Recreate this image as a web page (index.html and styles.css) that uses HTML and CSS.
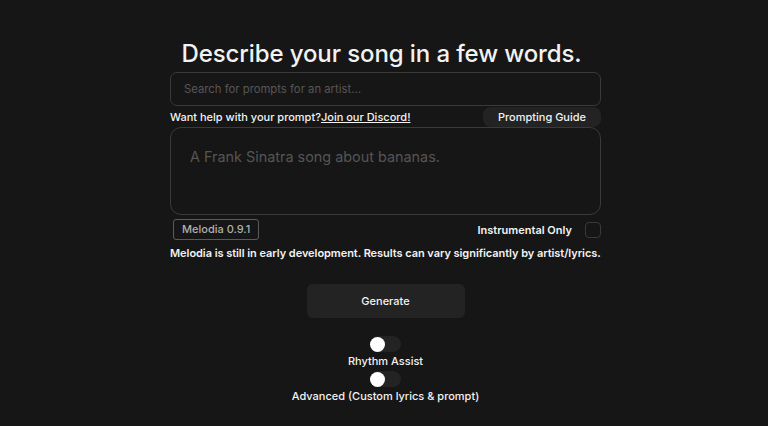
FILE: index.html
```html
<!DOCTYPE html>
<html lang="en">
<head>
    <meta charset="UTF-8">
    <meta name="viewport" content="width=device-width, initial-scale=1.0">
    <title>Melodia</title>
    <link rel="stylesheet" href="styles.css">
</head>
<body>
    <div class="container">
        <h1>Describe your song in a few words.</h1>

        <input type="text" class="search" placeholder="Search for prompts for an artist...">

        <div class="help-row">
            <span>Want help with your prompt?<a href="#">Join our Discord!</a></span>
            <button class="guide-btn">Prompting Guide</button>
        </div>

        <textarea class="prompt" placeholder="A Frank Sinatra song about bananas."></textarea>

        <div class="options-row">
            <span class="model-tag">Melodia 0.9.1</span>
            <label class="instrumental">
                Instrumental Only
                <span class="checkbox"></span>
            </label>
        </div>

        <p class="notice">Melodia is still in early development. Results can vary significantly by artist/lyrics.</p>

        <button class="generate-btn">Generate</button>

        <div class="toggle-group">
            <span class="toggle"><span class="knob"></span></span>
            <span class="toggle-label">Rhythm Assist</span>
            <span class="toggle"><span class="knob"></span></span>
            <span class="toggle-label">Advanced (Custom lyrics &amp; prompt)</span>
        </div>
    </div>
</body>
</html>
```

FILE: styles.css
```css
body {
    margin: 0;
    background: #161616;
    color: #f2f2f2;
    font-family: Inter, "Noto Sans", sans-serif;
}
.container {
    width: 431px;
    margin: 0 auto;
    padding: 40px 0 0 3px;
    display: flex;
    flex-direction: column;
}
h1 {
    margin: 0 0 4px;
    font-size: 24px;
    font-weight: 500;
    line-height: 28px;
    text-align: center;
    letter-spacing: -0.1px;
    padding-right: 8px;
}
.search {
    height: 34px;
    box-sizing: border-box;
    background: #161616;
    border: 1px solid #3a3a3a;
    border-radius: 7px;
    padding: 0 13px;
    font-family: inherit;
    font-size: 11.3px;
    color: #ddd;
    outline: none;
}
.search::placeholder {
    color: #565656;
}
.help-row {
    display: flex;
    justify-content: space-between;
    align-items: center;
    margin-top: 1px;
    font-size: 11px;
    font-weight: 500;
}
.help-row a {
    color: #f2f2f2;
    text-decoration: underline;
}
.guide-btn {
    background: #232323;
    color: #f2f2f2;
    border: none;
    border-radius: 8px;
    height: 20px;
    width: 118px;
    padding: 0;
    font-family: inherit;
    font-size: 11px;
    font-weight: 500;
}
.prompt {
    height: 88px;
    box-sizing: border-box;
    background: #161616;
    border: 1px solid #3a3a3a;
    border-radius: 11px;
    padding: 20px 19px;
    font-family: inherit;
    font-size: 14.4px;
    color: #ddd;
    resize: none;
    outline: none;
}
.prompt::placeholder {
    color: #555;
}
.options-row {
    display: flex;
    justify-content: space-between;
    align-items: center;
    margin-top: 4px;
    padding-left: 3px;
}
.model-tag {
    border: 1px solid #5a5a5a;
    border-radius: 3px;
    padding: 2px 8px;
    font-size: 11px;
    line-height: 15px;
    font-weight: 500;
    color: #b0b0b0;
}
.instrumental {
    display: flex;
    align-items: center;
    gap: 13px;
    font-size: 11px;
    font-weight: 600;
}
.checkbox {
    width: 16px;
    height: 16px;
    box-sizing: border-box;
    border: 1px solid #393939;
    border-radius: 4px;
}
.notice {
    margin: 6px 0 0;
    font-size: 11px;
    font-weight: 600;
    letter-spacing: -0.05px;
    white-space: nowrap;
}
.generate-btn {
    align-self: center;
    margin-top: 24px;
    width: 158px;
    height: 34px;
    background: #232323;
    color: #f2f2f2;
    border: none;
    border-radius: 6px;
    font-family: inherit;
    font-size: 11px;
    font-weight: 500;
}
.toggle-group {
    display: flex;
    flex-direction: column;
    align-items: center;
    margin-top: 18px;
}
.toggle {
    display: flex;
    align-items: center;
    width: 31px;
    height: 16px;
    background: #232323;
    border-radius: 8px;
}
.knob {
    width: 15px;
    height: 15px;
    background: #fff;
    border-radius: 50%;
}
.toggle-label {
    font-size: 11px;
    font-weight: 500;
    line-height: 18px;
    margin-bottom: 1px;
}
```
